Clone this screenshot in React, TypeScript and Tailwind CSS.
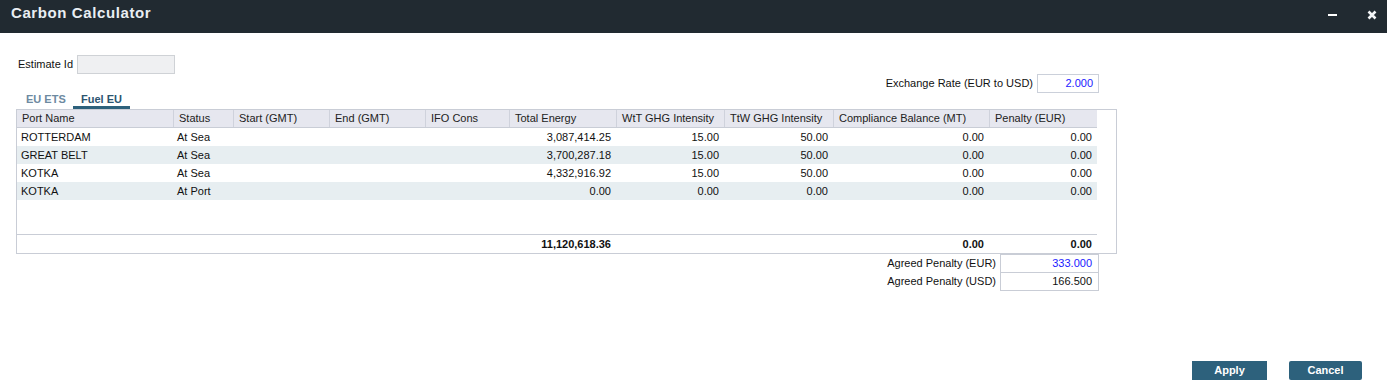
import React from "react";

const cols = [
  { name: "Port Name", w: 156, align: "left" },
  { name: "Status", w: 60, align: "left" },
  { name: "Start (GMT)", w: 96, align: "left" },
  { name: "End (GMT)", w: 96, align: "left" },
  { name: "IFO Cons", w: 84, align: "right" },
  { name: "Total Energy", w: 107, align: "right" },
  { name: "WtT GHG Intensity", w: 108, align: "right" },
  { name: "TtW GHG Intensity", w: 109, align: "right" },
  { name: "Compliance Balance (MT)", w: 156, align: "right" },
  { name: "Penalty (EUR)", w: 108, align: "right" },
];

const rows = [
  ["ROTTERDAM", "At Sea", "", "", "", "3,087,414.25", "15.00", "50.00", "0.00", "0.00"],
  ["GREAT BELT", "At Sea", "", "", "", "3,700,287.18", "15.00", "50.00", "0.00", "0.00"],
  ["KOTKA", "At Sea", "", "", "", "4,332,916.92", "15.00", "50.00", "0.00", "0.00"],
  ["KOTKA", "At Port", "", "", "", "0.00", "0.00", "0.00", "0.00", "0.00"],
];

const totals = ["", "", "", "", "", "11,120,618.36", "", "", "0.00", "0.00"];

export default function App() {
  return (
    <div
      className="w-[1387px] h-[385px] bg-white flex flex-col text-[11px] text-[#111]"
      style={{ fontFamily: '"Liberation Sans", Arial, sans-serif' }}
    >
      {/* Title bar */}
      <div className="h-[33px] bg-[#212a31] flex items-center justify-between shrink-0">
        <div className="pl-[11px] pb-[6px] text-[15px] font-bold tracking-[0.6px] text-[#e9eef3]">
          Carbon Calculator
        </div>
        <div className="flex items-center pr-[10px] pb-[4px]">
          <div className="w-[9px] h-[2px] bg-white mr-[30px]" />
          <svg width="10" height="10" viewBox="0 0 10 10">
            <path d="M1.5 1.5 L8.5 8.5 M8.5 1.5 L1.5 8.5" stroke="#f2f4f6" strokeWidth="2.6" strokeLinecap="butt" />
          </svg>
        </div>
      </div>

      {/* Body */}
      <div className="pl-[16px] w-[1117px] flex flex-col">
        {/* Estimate Id */}
        <div className="mt-[22px] flex items-center h-[19px]">
          <span className="pl-[2px] w-[61px]">Estimate Id</span>
          <div className="w-[98px] h-[19px] bg-[#eff0f2] border border-[#cfd2d6]" />
        </div>

        {/* Exchange rate */}
        <div className="flex items-center justify-end h-[19px] pr-[18px]">
          <span className="mr-[4px]">Exchange Rate (EUR to USD)</span>
          <div className="w-[62px] h-[19px] border border-[#cbd0da] text-right pr-[5px] leading-[17px] text-[#1a1aff]">
            2.000
          </div>
        </div>

        {/* Tabs */}
        <div className="flex items-end h-[17px] -mt-[1px]">
          <div className="pl-[10px] w-[57px] h-[17px] text-[11px] text-[#6d8aa1] font-bold leading-[15px] border-b-[3px] border-transparent">
            EU ETS
          </div>
          <div className="w-[57px] h-[17px] text-center text-[11px] text-[#2c5570] font-bold leading-[15px] border-b-[3px] border-[#2d617c]">
            Fuel EU
          </div>
        </div>

        {/* Table */}
        <div className="w-[1101px] h-[145px] border border-[#c9cdd6] flex flex-col">
          <div className="flex w-[1080px] h-[18px] bg-[#e6e7ef] border-b border-[#c9cdd6]">
            {cols.map((c, i) => (
              <div
                key={c.name}
                style={{ width: c.w }}
                className={`h-full pl-[5px] leading-[17px] text-[#222] whitespace-nowrap overflow-hidden ${i > 0 ? "border-l border-[#cfd2dc]" : ""}`}
              >
                {c.name}
              </div>
            ))}
          </div>
          <div className="flex-1 flex flex-col">
            {rows.map((r, ri) => (
              <div key={ri} className={`flex w-[1080px] h-[18px] ${ri % 2 === 1 ? "bg-[#e7eef1]" : "bg-white"}`}>
                {r.map((v, ci) => (
                  <div
                    key={ci}
                    style={{ width: cols[ci].w }}
                    className={`h-full leading-[19px] whitespace-nowrap ${cols[ci].align === "right" ? "text-right pr-[5px]" : "pl-[4px]"}`}
                  >
                    {v}
                  </div>
                ))}
              </div>
            ))}
          </div>
          <div className="flex w-[1080px] h-[19px] border-t border-[#c9cdd6] font-bold">
            {totals.map((v, ci) => (
              <div
                key={ci}
                style={{ width: cols[ci].w }}
                className={`h-full leading-[19px] whitespace-nowrap ${cols[ci].align === "right" ? "text-right pr-[5px]" : "pl-[4px]"}`}
              >
                {v}
              </div>
            ))}
          </div>
        </div>

        {/* Agreed penalty */}
        <div className="flex flex-col items-end pr-[18px]">
          <div className="flex items-center h-[18px]">
            <span className="mr-[4px]">Agreed Penalty (EUR)</span>
            <div className="w-[99px] h-[19px] border border-[#c9cdd6] text-right pr-[6px] leading-[17px] text-[#1a1aff]">
              333.000
            </div>
          </div>
          <div className="flex items-center h-[18px]">
            <span className="mr-[4px]">Agreed Penalty (USD)</span>
            <div className="w-[99px] h-[19px] border border-[#c9cdd6] text-right pr-[6px] leading-[17px]">
              166.500
            </div>
          </div>
        </div>
      </div>

      {/* Footer buttons */}
      <div className="mt-auto mb-[5px] flex justify-end pr-[25px] gap-[22px]">
        <button className="w-[75px] h-[19px] bg-[#2d617c] text-white font-bold text-[11px] leading-[19px]">
          Apply
        </button>
        <button className="w-[73px] h-[19px] bg-[#2d617c] text-white font-bold text-[11px] leading-[19px] rounded-[2px]">
          Cancel
        </button>
      </div>
    </div>
  );
}
